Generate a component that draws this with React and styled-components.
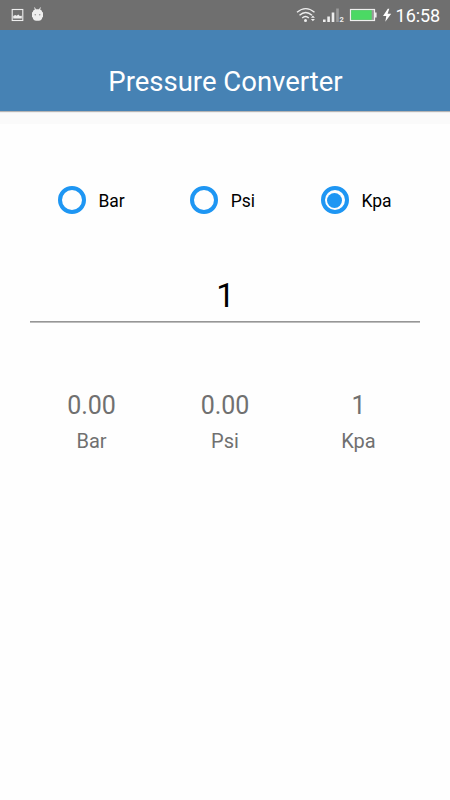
import React, { useState } from 'react';
import styled, { createGlobalStyle } from 'styled-components';

const GlobalStyle = createGlobalStyle`
  * {
    box-sizing: border-box;
  }
  body {
    margin: 0;
    background: #fefefe;
    font-family: Roboto, sans-serif;
  }
`;

const Screen = styled.div`
  width: 450px;
  height: 800px;
  display: flex;
  flex-direction: column;
  overflow: hidden;
`;

const StatusBar = styled.div`
  height: 30px;
  flex-shrink: 0;
  background: #6f6f6f;
`;

const HeaderBar = styled.header`
  height: 81px;
  flex-shrink: 0;
  padding-top: 23px;
  padding-left: 1px;
  background: #4682b4;
  color: #fff;
  font-size: 27.5px;
  line-height: 58px;
  text-align: center;
  box-shadow: 0 1px 1px rgba(0, 0, 0, 0.28);
  z-index: 1;
`;

const HeaderGap = styled.div`
  height: 13px;
  flex-shrink: 0;
  background: #fafafa;
`;

const Content = styled.main`
  flex: 1;
  padding: 61px 30px 0;
`;

const RadioRow = styled.div`
  display: flex;
  padding-left: 28px;
  height: 30px;
`;

const RadioOption = styled.label`
  display: flex;
  align-items: center;
  gap: 12.4px;
  width: ${({ width }) => width}px;
  color: #000;
  font-size: 17.5px;
  line-height: 20px;
`;

const RadioText = styled.span`
  padding-top: 2px;
`;

const RadioCircle = styled.button`
  width: 28px;
  height: 28px;
  flex-shrink: 0;
  display: flex;
  align-items: center;
  justify-content: center;
  padding: 0;
  background: transparent;
  border: 4px solid #1e96f3;
  border-radius: 50%;
`;

const RadioDot = styled.span`
  width: 15px;
  height: 15px;
  border-radius: 50%;
  background: #1e96f3;
`;

const ValueInput = styled.input`
  display: block;
  width: 390px;
  height: 56px;
  margin-top: 51px;
  margin-bottom: 65px;
  padding: 3px 0 0 1px;
  border: 0;
  border-bottom: 1px solid #969696;
  box-shadow: 0 1px 0 #bdbdbd;
  outline: none;
  background: transparent;
  color: #000;
  font-family: Roboto, sans-serif;
  font-size: 33px;
  text-align: center;
`;

const Results = styled.div`
  display: grid;
  grid-template-columns: repeat(3, 133.5px);
  justify-content: center;
`;

const Result = styled.div`
  display: flex;
  flex-direction: column;
  align-items: center;
  color: #707070;
`;

const ResultValue = styled.span`
  font-size: 25px;
  line-height: 37px;
`;

const ResultUnit = styled.span`
  font-size: 20px;
  line-height: 34px;
`;

const StatusIcons = () => (
  <svg width="450" height="30" viewBox="0 0 450 30" display="block">
    {/* notifications */}
    <rect x="12.2" y="9.5" width="10.6" height="11" fill="none" stroke="#eee" strokeWidth="1.1" />
    <path d="M13.2 18.6v-2.6l2-1 1.5.8 1.6-1.3 1.5 1.5 2-.3v2.9z" fill="#eee" />
    <path d="M34.6 7.500l1 2.500M40.400 7.500l-1 2.500" stroke="#eee" strokeWidth="1" />
    <path
      d="M32.700 12.300H32v5h.7c.2 2.300 1.400 3.500 3.500 3.500h2.600c2.100 0 3.300-1.200 3.500-3.500h.7v-5h-.7c-.3-2-1.600-3.100-3.600-3.100h-2.400c-2 0-3.300 1.100-3.600 3.100z"
      fill="#eee"
    />
    <circle cx="35.3" cy="14.8" r="0.8" fill="#999" />
    <circle cx="39.7" cy="14.8" r="0.8" fill="#999" />

    {/* wifi */}
    <g fill="none" stroke="#eee" strokeWidth="1.4">
      <path d="M297 12.300Q305.700 5 314.500 12.300" />
      <path d="M299.500 15.300Q305.700 9.600 312 15.300" />
      <path d="M302.200 18Q305.500 14.800 308.800 18" />
    </g>
    <circle cx="305.5" cy="20.4" r="1.5" fill="#eee" />
    <path d="M312.900 15.400l2 2.300h-4zM312.900 21.200l2-2.300h-4z" fill="#eee" />

    {/* signal */}
    <g fill="#eee">
      <rect x="323" y="19.5" width="2.6" height="2.5" />
      <rect x="327.3" y="16.5" width="2.6" height="5.5" />
      <rect x="331.7" y="12.5" width="2.6" height="9.5" />
      <rect x="336.2" y="8.5" width="2.6" height="13.5" opacity="0.35" />
      <text x="339.6" y="22" fontFamily="Roboto, sans-serif" fontSize="7.5" fontWeight="700">2</text>
    </g>

    {/* battery */}
    <rect x="350.5" y="9.5" width="24" height="11" fill="#999" stroke="#eee" strokeWidth="1.2" />
    <rect x="351.2" y="10.2" width="20.5" height="9.6" fill="#4bd964" />
    <path d="M375 12.5h1.6v5H375z" fill="#eee" />
    <path d="M387.8 8.7L383 16h3.3l-1 5.8 5.9-8h-3.6l1.7-5.1z" fill="#fff" />

    <text x="395.6" y="22" fontFamily="Roboto, sans-serif" fontSize="18" fill="#fff" textLength="44.5">
      16:58
    </text>
  </svg>
);

// size of each unit in kPa
const units = [
  { name: 'Bar', width: 132.4, kpa: 100 },
  { name: 'Psi', width: 130.6, kpa: 6.89476 },
  { name: 'Kpa', width: 90, kpa: 1 },
];

const convert = (value, from, to) => {
  if (from.name === to.name) return value;
  return Math.floor((Number(value) * from.kpa) / to.kpa).toFixed(2);
};

const App = () => {
  const [selected, setSelected] = useState(units[2]);
  const [value, setValue] = useState('1');

  return (
    <>
      <GlobalStyle />
      <Screen>
        <StatusBar>
          <StatusIcons />
        </StatusBar>
        <HeaderBar>Pressure Converter</HeaderBar>
        <HeaderGap />
        <Content>
          <RadioRow>
            {units.map((unit) => (
              <RadioOption key={unit.name} width={unit.width}>
                <RadioCircle onClick={() => setSelected(unit)}>
                  {selected.name === unit.name && <RadioDot />}
                </RadioCircle>
                <RadioText>{unit.name}</RadioText>
              </RadioOption>
            ))}
          </RadioRow>
          <ValueInput value={value} onChange={(e) => setValue(e.target.value)} />
          <Results>
            {units.map((unit) => (
              <Result key={unit.name}>
                <ResultValue>{convert(value, selected, unit)}</ResultValue>
                <ResultUnit>{unit.name}</ResultUnit>
              </Result>
            ))}
          </Results>
        </Content>
      </Screen>
    </>
  );
};

export default App;
